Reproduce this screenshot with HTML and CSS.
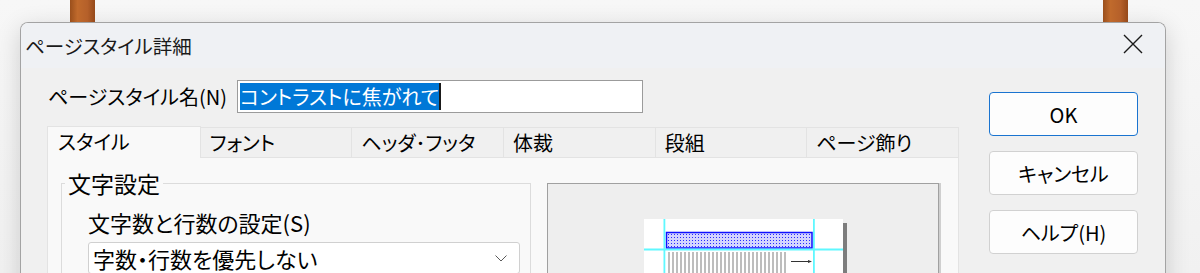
FILE: index.html
```html
<!DOCTYPE html>
<html lang="ja">
<head>
  <meta charset="UTF-8" />
  <title>ページスタイル詳細</title>
  <link rel="stylesheet" href="styles.css">
</head>
<body>
  <div class="backdrop">
    <span class="post"></span>
    <span class="post"></span>
  </div>

  <div class="dialog">
    <div class="titlebar">
      <span class="title">ページスタイル詳細</span>
      <span class="close">
        <svg width="20" height="20" viewBox="0 0 20 20">
          <path d="M1 1 L19 19 M19 1 L1 19" stroke="#1a1a1a" stroke-width="1.4" fill="none" />
        </svg>
      </span>
    </div>

    <div class="dialog-body">
      <div class="main">
        <div class="name-row">
          <label class="name-label">ページスタイル名(N)</label>
          <div class="textbox"><span class="selected">コントラストに焦がれて</span><span class="caret"></span></div>
        </div>

        <div class="tabs">
          <div class="tab active">スタイル</div>
          <div class="tab">フォント</div>
          <div class="tab">ヘッダ･フッタ</div>
          <div class="tab">体裁</div>
          <div class="tab">段組</div>
          <div class="tab">ページ飾り</div>
        </div>

        <div class="panel">
          <div class="group">
            <div class="group-title">文字設定</div>
            <div class="field-label">文字数と行数の設定(S)</div>
            <div class="select">
              <span>字数・行数を優先しない</span>
              <svg width="12" height="7" viewBox="0 0 12 7">
                <path d="M0.5 0.5 L6 6 L11.5 0.5" stroke="#5a5a5a" stroke-width="1" fill="none" />
              </svg>
            </div>
          </div>

          <div class="preview">
            <svg width="204" height="60" viewBox="0 0 204 60">
              <defs>
                <pattern id="dots" width="3" height="3" patternUnits="userSpaceOnUse">
                  <rect width="3" height="3" fill="#d4d4ff" />
                  <rect width="1" height="1" fill="#2a2aff" />
                </pattern>
                <pattern id="stripes" width="4" height="4" patternUnits="userSpaceOnUse">
                  <rect width="4" height="4" fill="#ffffff" />
                  <rect x="0" width="2" height="4" fill="#bdbdbd" />
                </pattern>
              </defs>
              <rect x="199" y="4" width="4" height="56" fill="#7d7d7d" />
              <rect x="0" y="0" width="199" height="60" fill="#ffffff" />
              <rect x="22" y="33" width="122" height="27" fill="url(#stripes)" />
              <rect x="22.5" y="13.5" width="145.5" height="15.5" fill="url(#dots)" stroke="#1010ff" stroke-width="1.5" />
              <rect x="19.5" y="0" width="1.8" height="60" fill="#5ff8ff" />
              <rect x="169" y="0" width="1.8" height="60" fill="#5ff8ff" />
              <rect x="0" y="29.5" width="199" height="2" fill="#5ff8ff" />
              <path d="M147 42.5 H166" stroke="#333" stroke-width="1" />
              <path d="M164 41 L168 42.5 L164 44 Z" fill="#333" />
            </svg>
          </div>
        </div>
      </div>

      <div class="buttons">
        <div class="button default">OK</div>
        <div class="button">キャンセル</div>
        <div class="button">ヘルプ(H)</div>
      </div>
    </div>
  </div>
</body>
</html>
```

FILE: styles.css
```css
/* RESET */
* { box-sizing: border-box; margin: 0; padding: 0; }
html, body { width: 100%; height: 100%; overflow: hidden; }

body {
  background: linear-gradient(to bottom, #f7f7f7 0%, #f1f1f1 100%);
  font-family: "Noto Sans CJK JP", "Noto Sans", sans-serif;
  font-size: 20px;
  font-feature-settings: "palt";
  color: #000;
}

/* WOODEN POSTS BEHIND THE DIALOG */
.backdrop {
  display: flex;
  justify-content: space-between;
  height: 22px;
  padding: 0 72px 0 70px;
}
.post {
  width: 25px;
  height: 100%;
  background: linear-gradient(to right, #9a4f1c 0%, #c06a2c 30%, #b5602a 70%, #95491a 100%);
}

/* DIALOG FRAME */
.dialog {
  margin-left: 20px;
  width: 1146px;
  border: 1px solid #a3a3a3;
  border-bottom: none;
  border-radius: 8px 8px 0 0;
  overflow: hidden;
  box-shadow: 0 6px 24px rgba(0, 0, 0, 0.16);
}

.titlebar {
  height: 45px;
  display: flex;
  align-items: center;
  justify-content: space-between;
  padding-left: 4px;
  background: #eff1f4;
}
.title { font-size: 19.5px; line-height: 26px; color: #1a1a1a; }
.close {
  display: flex;
  margin: -3px 22px 0 0;
}

.dialog-body {
  display: flex;
  align-items: flex-start;
  background: #f0f0f0;
  padding: 12px 27px 0 26px;
  height: 300px;
}

.main { width: 912px; }

/* PAGE STYLE NAME */
.name-row {
  display: flex;
  align-items: center;
  height: 33px;
}
.name-label {
  width: 190px;
  padding-left: 1px;
  line-height: 26px;
}
.textbox {
  display: flex;
  align-items: center;
  width: 406px;
  height: 33px;
  border: 1px solid #9b9b9b;
  background: #fff;
  padding: 2px;
}
.selected {
  background: #0078d7;
  color: #fff;
  height: 27px;
  line-height: 27px;
}
.caret {
  width: 2px;
  height: 27px;
  background: #1a1a1a;
}

/* TABS */
.tabs {
  display: flex;
  margin-top: 14px;
  height: 31px;
}
.tab {
  flex: 1;
  height: 31px;
  line-height: 30px;
  padding-left: 9px;
  border: 1px solid #e3e3e3;
  border-left: none;
  background: #f0f0f0;
}
.tab.active {
  height: 32px;
  margin-top: -1px;
  padding-left: 10px;
  border-left: 1px solid #e3e3e3;
  border-bottom: none;
  background: #f9f9f9;
}

.panel {
  display: flex;
  align-items: flex-start;
  height: 200px;
  background: #f9f9f9;
  border-left: 1px solid #e3e3e3;
  border-right: 1px solid #e3e3e3;
  padding-left: 13px;
}

/* GROUP BOX */
.group {
  width: 470px;
  margin-top: 25px;
  border: 1px solid #dcdcdc;
  padding: 0 10px 20px 26px;
}
.group-title {
  width: fit-content;
  margin: -14px 0 0 -23px;
  padding: 0 3px;
  line-height: 26px;
  font-size: 23px;
  background: #f9f9f9;
}
.field-label {
  margin-top: 13px;
  line-height: 26px;
  font-size: 22px;
}
.select {
  display: flex;
  align-items: center;
  justify-content: space-between;
  margin-top: 7px;
  height: 32px;
  border: 1px solid #d0d0d0;
  border-radius: 3px;
  background: #fff;
  padding: 0 12px 0 4px;
  line-height: 30px;
  font-size: 22px;
}

/* PREVIEW */
.preview {
  width: 392px;
  height: 120px;
  margin: 25px 0 0 16px;
  border: 1px solid #a0a0a0;
  box-shadow: 2px 0 0 #cfcfcf;
  background: #eeeeee;
  padding: 35px 0 0 96px;
}
.preview svg { display: block; }

/* BUTTONS */
.buttons {
  display: flex;
  flex-direction: column;
  gap: 15px;
  width: 149px;
  margin: 12px 0 0 30px;
}
.button {
  height: 44px;
  display: flex;
  align-items: center;
  justify-content: center;
  border: 1px solid #d1d1d1;
  border-radius: 4px;
  background: #fdfdfd;
}
.button.default { border-color: #1a74d0; }
```
